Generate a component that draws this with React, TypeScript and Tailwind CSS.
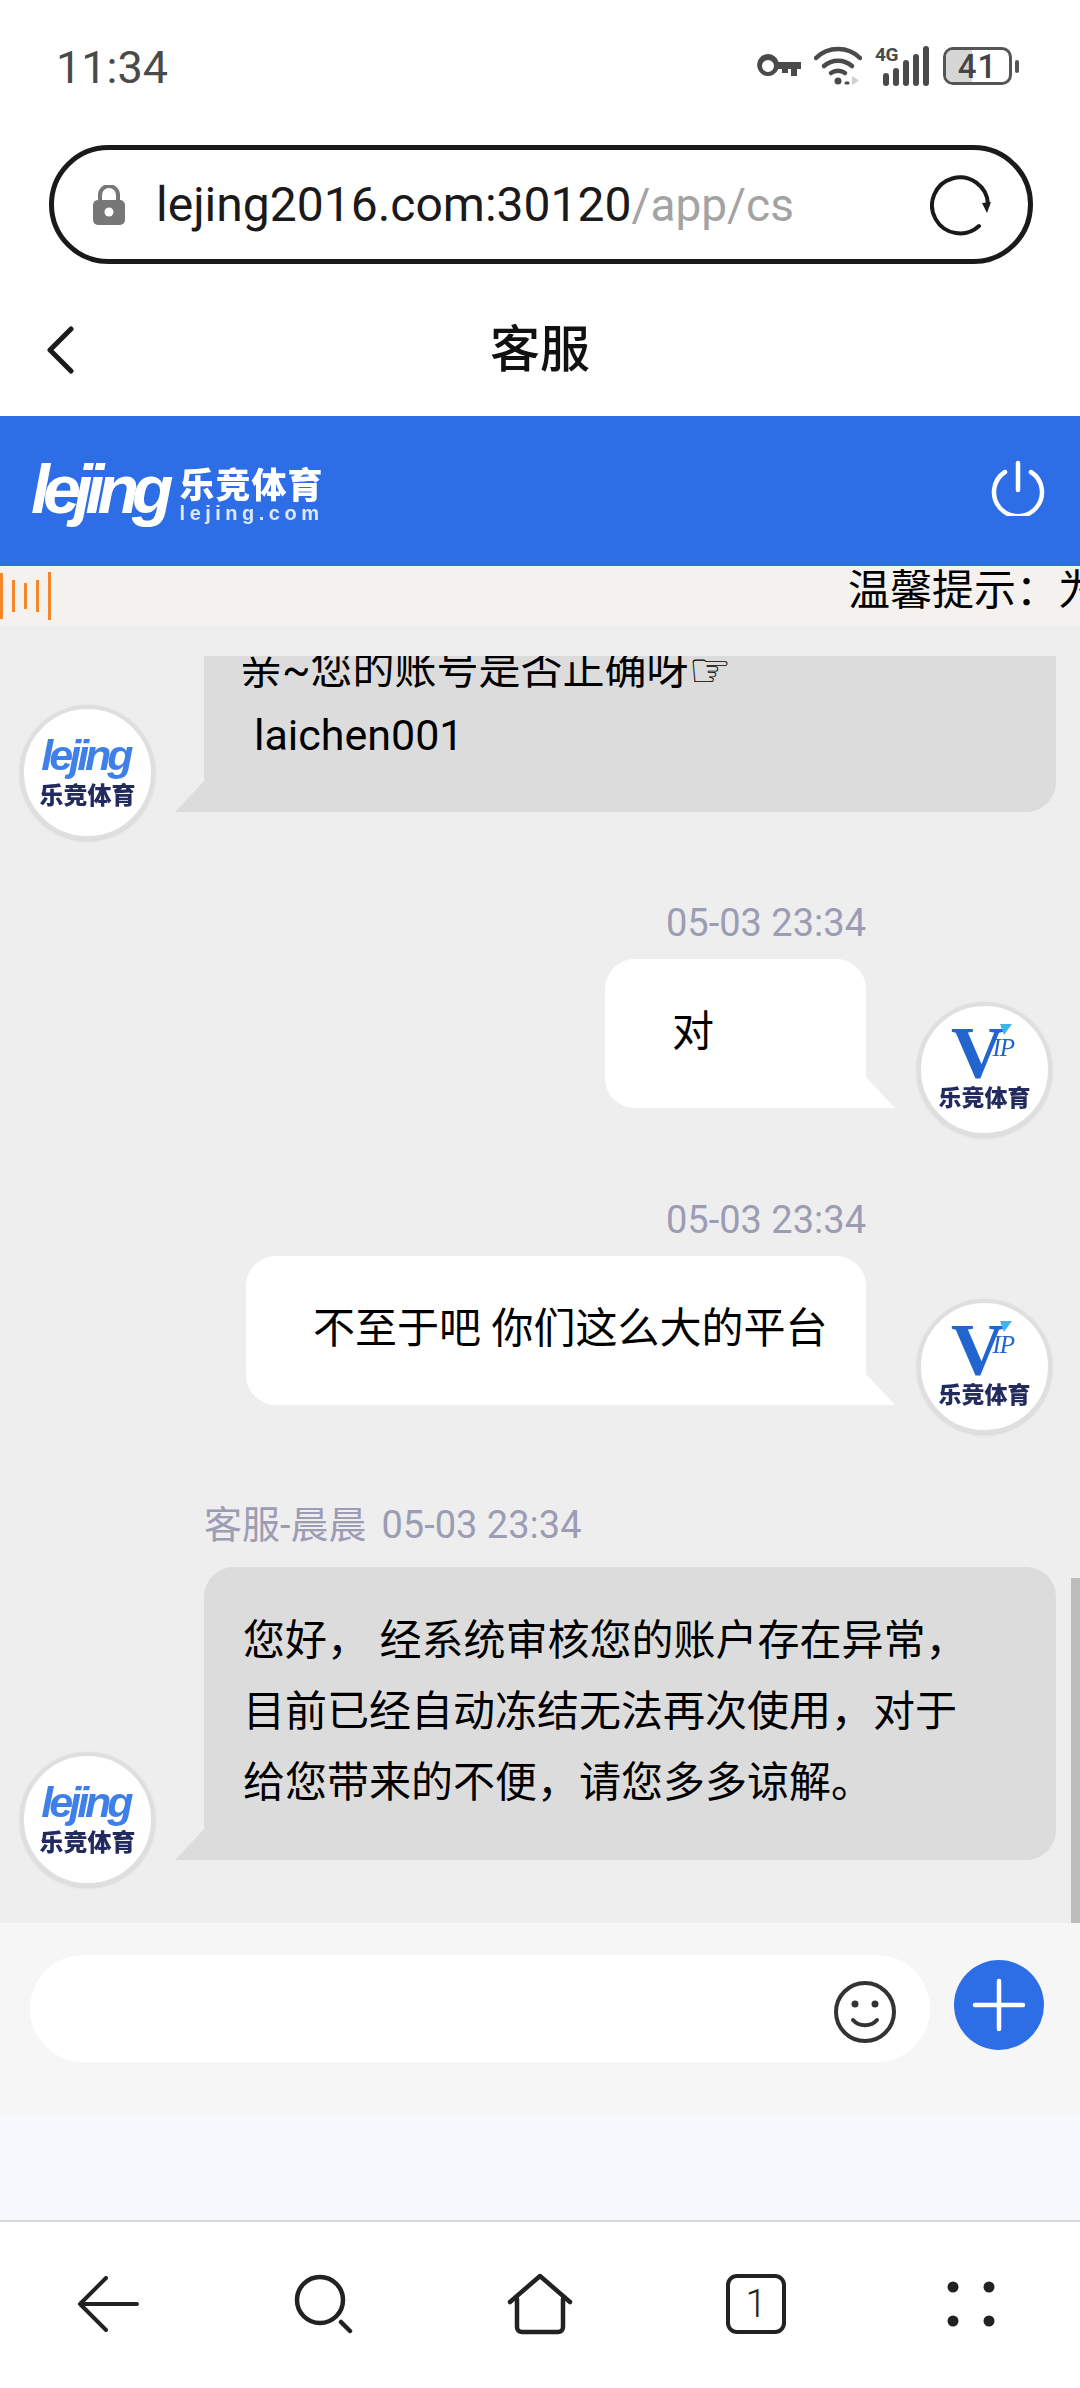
const cjk = "font-['Roboto','Noto_Sans_CJK_SC',sans-serif]";

function Tail({ side, color }: { side: 'left' | 'right'; color: string }) {
  return (
    <svg
      width="30"
      height="32"
      viewBox="0 0 30 32"
      className={side === 'left' ? 'absolute -left-[29px] bottom-0' : 'absolute -right-[29px] bottom-0'}
    >
      {side === 'left' ? <polygon points="30,0 30,32 0,32" fill={color} /> : <polygon points="0,0 0,32 30,32" fill={color} />}
    </svg>
  );
}

function LejingAvatar() {
  return (
    <div className="w-[135px] h-[135px] rounded-full bg-white border-[4px] border-[#dfdfdf] shrink-0 flex flex-col items-center justify-center pb-[5px] shadow-[0_1px_3px_rgba(0,0,0,0.12)]">
      <div className="font-['Liberation_Sans',sans-serif] font-bold italic text-[43px] leading-[46px] tracking-[-4px] text-[#3f80e8] pr-1 blur-[0.4px]">lejing</div>
      <div className="font-['Noto_Sans_CJK_SC',sans-serif] font-black text-[24px] leading-[28px] text-[#232b5e] mt-[2px] blur-[0.3px]">乐竞体育</div>
    </div>
  );
}

function VipAvatar() {
  return (
    <div className="w-[135px] h-[135px] rounded-full bg-white border-[4px] border-[#dfdfdf] shrink-0 flex flex-col items-center justify-center pb-[5px] shadow-[0_1px_3px_rgba(0,0,0,0.12)]">
      <div className="flex items-start h-[56px] pr-[4px] blur-[0.3px]">
        <span className="font-['Liberation_Serif',serif] font-bold text-[74px] leading-[58px] text-[#2265cf]">V</span>
        <div className="flex flex-col items-start -ml-[12px]">
          <svg width="12" height="12" viewBox="0 0 12 12" className="ml-[8px]"><polygon points="0,0 12,0 4,11" fill="#3fb3ea" /></svg>
          <span className="font-['Liberation_Serif',serif] italic text-[25px] leading-[24px] text-[#2265cf] tracking-[-1px]">IP</span>
        </div>
      </div>
      <div className="font-['Noto_Sans_CJK_SC',sans-serif] font-black text-[23px] leading-[28px] text-[#232b5e] mt-[2px] blur-[0.3px]">乐竞体育</div>
    </div>
  );
}

function RightMessage({ text, bubbleClass }: { text: string; bubbleClass: string }) {
  return (
    <div className="flex justify-end items-end pr-[28px]">
      <div className="flex flex-col items-end mb-[29px]">
        <div className={`${cjk} text-[38px] leading-[36px] text-[#9c9cb4] mb-[18px]`}>05-03 23:34</div>
        <div className={`relative h-[149px] bg-white rounded-tl-[30px] rounded-tr-[30px] rounded-bl-[30px] flex items-center ${bubbleClass}`}>
          <span className={`${cjk} text-[42px] leading-[60px] text-black -mt-[4px] whitespace-nowrap`}>{text}</span>
          <Tail side="right" color="#ffffff" />
        </div>
      </div>
      <div className="ml-[51px]"><VipAvatar /></div>
    </div>
  );
}

function Nav() {
  return (
    <div className="grid grid-cols-5 flex-1 place-items-center pb-[2px]">
      <svg width="62" height="56" viewBox="0 0 62 56" fill="none" stroke="#222" strokeWidth="4" strokeLinecap="round" strokeLinejoin="round">
        <path d="M60 28H3M29 2L3 28l26 26" />
      </svg>
      <svg width="60" height="60" viewBox="0 0 60 60" fill="none" stroke="#222" strokeWidth="4.5" strokeLinecap="round">
        <circle cx="26" cy="26" r="23" />
        <path d="M47 48l9 9" />
      </svg>
      <svg width="66" height="62" viewBox="0 0 66 62" fill="none" stroke="#222" strokeWidth="4.5" strokeLinecap="round" strokeLinejoin="round">
        <path d="M3 29L33 3l30 26" />
        <path d="M10 26v28a5 5 0 005 5h36a5 5 0 005-5V26" />
      </svg>
      <div className="w-[60px] h-[60px] rounded-[11px] border-[4px] border-[#222] flex items-center justify-center font-['Roboto',sans-serif] font-light text-[38px] text-[#222]">1</div>
      <svg width="50" height="46" viewBox="0 0 50 46" fill="#222">
        <circle cx="6" cy="6" r="5.5" />
        <circle cx="42" cy="6" r="5.5" />
        <circle cx="6" cy="40" r="5.5" />
        <circle cx="42" cy="40" r="5.5" />
      </svg>
    </div>
  );
}

export default function App() {
  return (
    <div className="w-[1080px] h-[2388px] flex flex-col bg-white overflow-hidden relative">
      {/* status bar */}
      <div className="h-[145px] shrink-0 flex items-start justify-between pl-[56px] pr-[61px] pt-[41px]">
        <span className="font-['Roboto',sans-serif] text-[45px] leading-[54px] text-[#4a4a4a]">11:34</span>
        <div className="flex items-center gap-[13px] h-[54px] -mt-[2px]">
          <svg width="44" height="26" viewBox="0 0 44 26" fill="#4a4a4a">
            <path d="M11 1a11 11 0 0110.5 8H44v7h-4v7h-6v-7h-3v4h-6v-4h-3.6A11 11 0 1111 1zm0 6a5 5 0 100 12 5 5 0 000-12z" />
          </svg>
          <svg width="48" height="40" viewBox="0 0 48 40" fill="none" stroke="#4a4a4a" strokeWidth="4.5" strokeLinecap="round">
            <path d="M2 12C14 0 34 0 46 12" />
            <path d="M10 20c8-7 20-7 28 0" />
            <path d="M17 27c4-3 10-3 14 0" />
            <circle cx="24" cy="35" r="3.5" fill="#4a4a4a" stroke="none" />
            <path d="M32 37h2" strokeWidth="3" />
            <polygon points="38,30 38,39 45,34.5" fill="#cfcfcf" stroke="none" />
          </svg>
          <div className="relative w-[54px] h-[40px]">
            <span className="absolute left-0 -top-[2px] font-['Roboto',sans-serif] font-bold text-[19px] leading-[22px] tracking-[-0.5px] text-[#4a4a4a]">4G</span>
            <svg width="54" height="40" viewBox="0 0 54 40" fill="#4a4a4a">
              <rect x="8" y="27" width="6" height="13" rx="3" />
              <rect x="18" y="22" width="6" height="18" rx="3" />
              <rect x="28" y="14" width="6" height="26" rx="3" />
              <rect x="38" y="8" width="6" height="32" rx="3" />
              <rect x="48" y="0" width="6" height="40" rx="3" />
            </svg>
          </div>
          <div className="flex items-center gap-[3px] ml-[1px]">
            <div className="relative w-[69px] h-[38px] rounded-[10px] border-[3px] border-[#555] overflow-hidden flex items-center justify-center">
              <div className="absolute left-0 top-0 bottom-0 w-[41%] bg-[#d6d6d6]" />
              <span className="relative font-['Roboto',sans-serif] font-medium text-[33px] leading-none tracking-[1px] text-[#444]">41</span>
            </div>
            <div className="w-[4px] h-[13px] rounded-[2px] bg-[#555]" />
          </div>
        </div>
      </div>

      {/* url bar */}
      <div className="shrink-0 mx-[49px] w-[984px] h-[119px] rounded-[60px] border-[5px] border-[#1a1a1a] flex items-center pl-[39px] pr-[36px]">
        <svg width="32" height="40" viewBox="0 0 32 40" className="shrink-0">
          <path d="M7 17V10a9 9 0 0118 0v7" fill="none" stroke="#777" strokeWidth="4" />
          <rect x="0" y="15" width="32" height="25" rx="5" fill="#777" />
          <circle cx="16" cy="27" r="4.5" fill="#fff" />
        </svg>
        <div className="font-['Roboto',sans-serif] text-[48px] leading-[60px] ml-[31px] text-[#1a1a1a] flex-1">
          lejing2016.com:30120<span className="text-[#a3a3a3] text-[46px]">/app/cs</span>
        </div>
        <svg width="62" height="62" viewBox="0 0 62 62" fill="none" stroke="#1a1a1a" strokeWidth="4" strokeLinecap="round" className="shrink-0">
          <path d="M49 52A28 28 0 1158 30" />
          <polygon points="52,29 61,28 57,39" fill="#1a1a1a" stroke="none" />
        </svg>
      </div>

      {/* title */}
      <div className="h-[152px] shrink-0 relative flex items-center justify-center">
        <svg width="28" height="48" viewBox="0 0 28 48" fill="none" stroke="#1a1a1a" strokeWidth="5" strokeLinecap="round" strokeLinejoin="round" className="absolute left-[46px] top-[62px]">
          <path d="M25 3L4 24l21 21" />
        </svg>
        <span className="font-['Noto_Sans_CJK_SC',sans-serif] font-medium text-[50px] leading-[60px] text-[#111] mt-[10px]">客服</span>
      </div>

      {/* blue header */}
      <div className="h-[150px] shrink-0 bg-[#2d6ee6] flex items-start justify-between pl-[31px] pr-[35px]">
        <div className="flex items-start text-white blur-[0.5px] mt-[33px]">
          <span className="font-['Liberation_Sans',sans-serif] font-bold italic text-[68px] leading-[80px] tracking-[-7px]">lejing</span>
          <div className="flex flex-col ml-[13px] mt-[14px]">
            <span className="font-['Noto_Sans_CJK_SC',sans-serif] font-black text-[35px] leading-[40px] tracking-[1px]">乐竞体育</span>
            <span className="font-['Liberation_Sans',sans-serif] font-bold text-[20px] leading-[22px] tracking-[4.5px] text-[#dfe8fb] -mt-[1px]">lejing.com</span>
          </div>
        </div>
        <svg width="54" height="56" viewBox="0 0 54 56" fill="none" stroke="#fff" strokeWidth="4.5" strokeLinecap="round" className="mt-[44px]">
          <path d="M27 3v27" />
          <path d="M14 12a24 24 0 1026 0" />
        </svg>
      </div>

      {/* marquee */}
      <div className="h-[59px] shrink-0 bg-[#f4f1ee] flex items-center overflow-hidden relative">
        <div className="flex items-center gap-[9px] w-[848px] h-full shrink-0">
          <div className="w-[3px] h-[46px] bg-[#f5862a]" />
          <div className="w-[3px] h-[32px] bg-[#f5862a]" />
          <div className="w-[3px] h-[26px] bg-[#f5862a]" />
          <div className="w-[3px] h-[32px] bg-[#f5862a]" />
          <div className="w-[3px] h-[48px] bg-[#f5862a]" />
        </div>
        <span className="font-['Noto_Sans_CJK_SC',sans-serif] text-[42px] leading-[50px] text-black whitespace-nowrap -mt-[17px]">温馨提示：为了您的账户安全</span>
      </div>

      {/* chat */}
      <div className="h-[1298px] shrink-0 bg-[#eeeeee] relative overflow-hidden pt-[31px] flex flex-col gap-[65px]">
        <div className="flex items-end pl-[20px]">
          <LejingAvatar />
          <div className="relative ml-[49px] w-[852px] h-[156px] mb-[28px] bg-[#dcdcdc] rounded-br-[30px] pl-[39px]">
            <div className="h-full overflow-hidden">
              <div className={`${cjk} text-[42px] leading-[60px] text-black -mt-[16px] -ml-[3px] whitespace-nowrap flex items-center`}>亲~您的账号是否正确呀<span className="font-['DejaVu_Sans',sans-serif] text-[48px] leading-[60px]">☞</span></div>
              <div className={`${cjk} text-[43px] leading-[60px] text-black mt-[5px] pl-[11px]`}>laichen001</div>
            </div>
            <Tail side="left" color="#dcdcdc" />
          </div>
        </div>

        <RightMessage text="对" bubbleClass="w-[261px] pl-[67px]" />
        <RightMessage text="不至于吧 你们这么大的平台" bubbleClass="w-[620px] pl-[67px]" />

        <div className="flex items-end pl-[20px] mt-[8px]">
          <LejingAvatar />
          <div className="ml-[49px] mb-[27px]">
            <div className={`${cjk} text-[38px] leading-[36px] text-[#9c9cb4] mb-[24px] whitespace-pre flex gap-[15px]`}>
              <span>客服-晨晨</span>
              <span>05-03 23:34</span>
            </div>
            <div className="relative w-[852px] h-[293px] bg-[#dcdcdc] rounded-tl-[30px] rounded-tr-[30px] rounded-br-[30px] pl-[39px] pt-[38px]">
              <div className={`${cjk} text-[42px] leading-[71px] text-black whitespace-pre`}>
                <div>您好， 经系统审核您的账户存在异常，</div>
                <div>目前已经自动冻结无法再次使用，对于</div>
                <div>给您带来的不便，请您多多谅解。</div>
              </div>
              <Tail side="left" color="#dcdcdc" />
            </div>
          </div>
        </div>

        <div className="absolute right-0 top-[953px] w-[9px] h-[345px] bg-[#bdbdbd]" />
      </div>

      {/* input */}
      <div className="h-[191px] shrink-0 bg-[#f6f6f6] flex items-start pl-[30px] pt-[32px]">
        <div className="w-[900px] h-[107px] bg-white rounded-[54px] flex items-center justify-end pr-[33px]">
          <svg width="64" height="64" viewBox="0 0 64 64" fill="none" stroke="#333" strokeWidth="4" strokeLinecap="round" className="mt-[7px]">
            <circle cx="32" cy="32" r="29" />
            <circle cx="22" cy="24" r="3.5" fill="#333" stroke="none" />
            <circle cx="42" cy="24" r="3.5" fill="#333" stroke="none" />
            <path d="M20 40c6 7 18 7 24 0" />
          </svg>
        </div>
        <div className="w-[90px] h-[90px] ml-[24px] mt-[5px] rounded-full bg-[#2d6ee6] flex items-center justify-center">
          <svg width="54" height="54" viewBox="0 0 54 54" stroke="#fff" strokeWidth="4.5" strokeLinecap="round">
            <path d="M27 3v48M3 27h48" />
          </svg>
        </div>
      </div>

      <div className="h-[106px] shrink-0 bg-[#f7f8fd]" />

      {/* bottom nav */}
      <div className="flex-1 bg-white border-t-2 border-[#d9d9d9] flex">
        <Nav />
      </div>
    </div>
  );
}
